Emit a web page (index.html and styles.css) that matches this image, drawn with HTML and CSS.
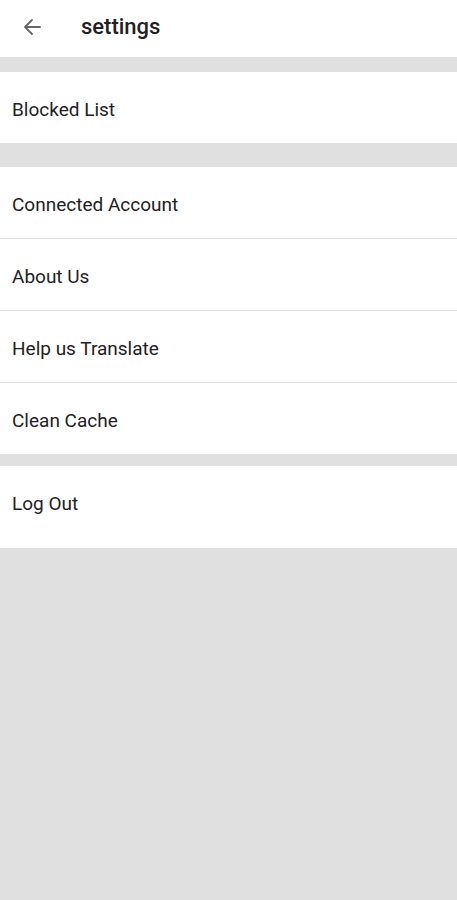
FILE: index.html
```html
<!DOCTYPE html>
<html>
<head>
<meta charset="utf-8">
<link rel="stylesheet" href="styles.css">
</head>
<body>
<header class="topbar">
  <svg class="back" width="20" height="20" viewBox="0 0 20 20"><path d="M18 10H3M10 3L3 10L10 17" fill="none" stroke="#666" stroke-width="1.8" stroke-linecap="round" stroke-linejoin="round"/></svg>
  <h1 class="title">settings</h1>
</header>
<div class="gap g1"></div>
<section class="group">
  <div class="row">Blocked List</div>
</section>
<div class="gap g2"></div>
<section class="group">
  <div class="row">Connected Account</div>
  <div class="row">About Us</div>
  <div class="row">Help us Translate</div>
  <div class="row">Clean Cache</div>
</section>
<div class="gap g3"></div>
<section class="group">
  <div class="row tall">Log Out</div>
</section>
</body>
</html>
```
FILE: styles.css
```css
html, body { margin: 0; padding: 0; }
body {
  background: #e0e0e0;
  font-family: Roboto, "Noto Sans", sans-serif;
  color: #222;
  min-height: 900px;
}
.topbar {
  height: 57px;
  background: #fff;
  display: flex;
  align-items: center;
}
.back { margin-left: 22px; margin-top: -4px; }
.title {
  margin: -4px 0 0 39px;
  font-size: 22px;
  font-weight: 500;
  color: #222;
}
.gap { background: #e0e0e0; }
.g1 { height: 15px; }
.g2 { height: 24px; }
.g3 { height: 12px; }
.group { background: #fff; }
.row {
  height: 68px;
  padding-top: 3px;
  display: flex;
  align-items: center;
  padding-left: 12px;
  font-size: 19px;
  border-bottom: 1px solid #dedede;
}
.row:last-child { border-bottom: none; }
.row.tall { height: 82px; padding-top: 0; padding-bottom: 8px; box-sizing: border-box; }
```
